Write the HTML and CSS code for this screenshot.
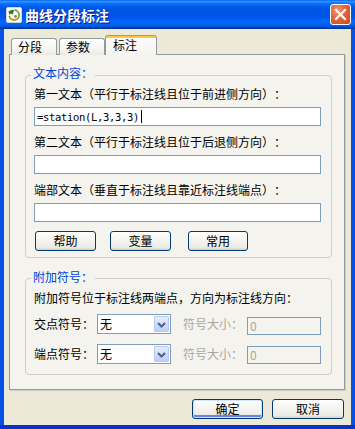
FILE: index.html
```html
<!DOCTYPE html>
<html lang="zh-CN">
<head>
<meta charset="utf-8">
<link rel="stylesheet" href="styles.css">
</head>
<body>
<div class="window">
  <div class="titlebar">
    <svg class="app-icon" width="16" height="16" viewBox="0 0 16 16">
      <rect x="0.5" y="0.5" width="15" height="15" rx="1.5" fill="#ffffff" stroke="#d4d4d4"/>
      <path d="M8.5 3 A5 5 0 1 1 3.2 9" fill="none" stroke="#7aa83c" stroke-width="1.8"/>
      <path d="M2.5 4 L8 2.5 L7 7.5 L5 6.5 L3.5 8 Z" fill="#2f7a1e"/>
      <circle cx="9.5" cy="9.5" r="1.4" fill="#b07a2a"/>
      <circle cx="6.5" cy="12.5" r="1" fill="#c9a040"/>
    </svg>
    <span class="title">曲线分段标注</span>
    <div class="close">
      <svg width="21" height="21" viewBox="0 0 21 21">
        <path d="M6 6 L15 15 M15 6 L6 15" stroke="#ffffff" stroke-width="2.2" stroke-linecap="square"/>
      </svg>
    </div>
  </div>
  <div class="client">
    <div class="tabs">
      <div class="tab t1">分段</div>
      <div class="tab t2">参数</div>
      <div class="tab active">标注</div>
    </div>
    <div class="panel">
      <div class="group g1">
        <div class="legend">文本内容：</div>
        <div class="label l1">第一文本（平行于标注线且位于前进侧方向）：</div>
        <div class="field"><span class="mono">=station(L,3,3,3)</span><span class="caret"></span></div>
        <div class="label">第二文本（平行于标注线且位于后退侧方向）：</div>
        <div class="field"></div>
        <div class="label">端部文本（垂直于标注线且靠近标注线端点）：</div>
        <div class="field"></div>
        <div class="btnrow">
          <div class="btn b1">帮助</div>
          <div class="btn b2">变量</div>
          <div class="btn b3">常用</div>
        </div>
      </div>
      <div class="group g2">
        <div class="legend lg2">附加符号：</div>
        <div class="label l1">附加符号位于标注线两端点，方向为标注线方向：</div>
        <div class="row r1">
          <span class="rlabel">交点符号：</span>
          <div class="combo"><span class="cval">无</span><span class="cbtn"><svg width="15" height="17" viewBox="0 0 15 17"><path d="M4 7 L7.5 10.5 L11 7" fill="none" stroke="#4d6185" stroke-width="2"/></svg></span></div>
          <span class="rlabel gray">符号大小：</span>
          <div class="dis d1">0</div>
        </div>
        <div class="row r2">
          <span class="rlabel">端点符号：</span>
          <div class="combo"><span class="cval">无</span><span class="cbtn"><svg width="15" height="17" viewBox="0 0 15 17"><path d="M4 7 L7.5 10.5 L11 7" fill="none" stroke="#4d6185" stroke-width="2"/></svg></span></div>
          <span class="rlabel gray">符号大小：</span>
          <div class="dis d2">0</div>
        </div>
      </div>
    </div>
    <div class="footer">
      <div class="btn fb default">确定</div>
      <div class="btn fb">取消</div>
    </div>
  </div>
</div>
</body>
</html>
```

FILE: styles.css
```css
html, body {
  margin: 0;
  padding: 0;
}
body {
  font-family: "Noto Sans CJK SC", "Liberation Sans", sans-serif;
  font-size: 12px;
  color: #000;
  text-spacing-trim: space-all;
}
.window {
  width: 355px;
  height: 429px;
  display: flex;
  flex-direction: column;
  background: linear-gradient(to bottom, #0552e6 calc(100% - 4px), #0833c8 calc(100% - 4px));
  box-sizing: border-box;
}
.titlebar {
  height: 29px;
  flex: none;
  display: flex;
  align-items: center;
  padding-left: 6px;
  background: linear-gradient(to bottom, #0058ee 0%, #3593ff 4%, #288eff 7%, #127dff 10%, #036ffc 14%, #0262ee 20%, #0057e5 28%, #0054e3 34%, #0055eb 56%, #005bf5 66%, #026afe 76%, #0062ef 86%, #0052d6 92%, #0040ab 96%, #003092 100%);
}
.app-icon {
  flex: none;
}
.title {
  margin-left: 3px;
  color: #ffffff;
  font-weight: bold;
  font-size: 14px;
  line-height: 16px;
  text-shadow: 1px 1px 0 #0a1883;
}
.close {
  margin-left: auto;
  margin-right: 4px;
  width: 21px;
  height: 21px;
  box-sizing: border-box;
  border: 1px solid #ffffff;
  border-radius: 3px;
  background: radial-gradient(circle at 35% 30%, #f09a7a 0%, #e2643c 45%, #c84a22 100%);
  display: flex;
  align-items: center;
  justify-content: center;
}
.close svg {
  margin: -1px;
}
.client {
  flex: 1;
  margin: 0 4px 4px 4px;
  background: #ece9d8;
  padding-top: 6px;
  display: flex;
  flex-direction: column;
}
.tabs {
  display: flex;
  align-items: flex-end;
  height: 20px;
  margin: 0 0 -1px 7px;
  position: relative;
  z-index: 1;
}
.tab {
  width: 46px;
  height: 17px;
  box-sizing: border-box;
  border: 1px solid #919b9c;
  border-bottom: none;
  border-radius: 3px 3px 0 0;
  background: linear-gradient(to bottom, #ffffff 0%, #f7f7f4 50%, #ecebe6 100%);
  padding-left: 6px;
  line-height: 16px;
}
.t1 {
  margin-right: 2px;
}
.tab.active {
  width: 52px;
  height: 20px;
  border-top: none;
  padding-left: 7px;
  padding-top: 2px;
  background: linear-gradient(to bottom, #e68b2c 0, #e68b2c 1px, #ffc73c 1px, #ffc73c 3px, #fcfcfe 3px, #f4f3ee 100%);
}
.panel {
  margin: 0 6px 0 5px;
  border: 1px solid #919b9c;
  background: #f4f3ee;
  box-shadow: 1px 1px 0 #d0cebf;
  padding: 20px 0 14px 15px;
}
.group {
  width: 307px;
  box-sizing: border-box;
  border: 1px solid #d0d0bf;
  border-radius: 4px;
  padding: 0 10px 6px 8px;
}
.g2 {
  margin-top: 20px;
  padding-bottom: 10px;
}
.legend {
  width: fit-content;
  margin: -10px 0 0 -3px;
  padding: 0 2px;
  background: #f4f3ee;
  color: #0046d5;
  line-height: 14px;
}
.lg2 {
  margin-top: -9px;
}
.label {
  line-height: 14px;
  margin-top: 9px;
  white-space: nowrap;
}
.label.l1 {
  margin-top: 7px;
}
.field {
  height: 19px;
  margin-top: 6px;
  box-sizing: border-box;
  border: 1px solid #7f9db9;
  background: #ffffff;
  padding-left: 2px;
  display: flex;
  align-items: center;
}
.mono {
  font-family: "DejaVu Sans Mono", "Liberation Mono", monospace;
  font-size: 10.5px;
  letter-spacing: -0.32px;
  line-height: 14px;
}
.caret {
  width: 1px;
  height: 13px;
  background: #000000;
  margin-left: 2px;
}
.btnrow {
  display: flex;
  margin-top: 9px;
}
.btn {
  height: 20px;
  box-sizing: border-box;
  border: 1px solid #003c74;
  border-radius: 3px;
  background: linear-gradient(to bottom, #ffffff 0%, #f6f5f1 40%, #ecebe6 85%, #d6d0c5 100%);
  text-align: center;
  line-height: 18px;
}
.b1, .b2 {
  width: 61px;
}
.b1 {
  margin-left: 1px;
}
.b2 {
  margin-left: 14px;
}
.b3 {
  width: 60px;
  margin-left: 17px;
}
.row {
  display: flex;
  align-items: flex-start;
  height: 20px;
}
.r1 {
  margin-top: 9px;
}
.r2 {
  margin-top: 10px;
}
.rlabel {
  width: 60px;
  line-height: 20px;
  white-space: nowrap;
}
.combo {
  width: 74px;
  height: 20px;
  margin-left: 3px;
  box-sizing: border-box;
  border: 1px solid #7f9db9;
  background: #ffffff;
  display: flex;
  align-items: center;
  padding: 0 1px 0 2px;
}
.cval {
  flex: 1;
  line-height: 16px;
}
.cbtn {
  width: 15px;
  height: 16px;
  box-sizing: border-box;
  border: 1px solid #b9c9ef;
  border-radius: 1px;
  background: linear-gradient(to bottom, #e6eefc 0%, #d0ddfa 50%, #bccdf8 100%);
  display: flex;
  align-items: center;
  justify-content: center;
  overflow: hidden;
}
.cbtn svg {
  flex: none;
}
.rlabel.gray {
  margin-left: 12px;
  color: #aca899;
}
.dis {
  width: 74px;
  height: 18px;
  margin-left: 4px;
  box-sizing: border-box;
  border: 1px solid #7f9db9;
  background: #f4f3ee;
  color: #aca899;
  padding-left: 2px;
  line-height: 16px;
}
.d1 {
  margin-top: 3px;
}
.d2 {
  margin-top: 2px;
}
.footer {
  display: flex;
  justify-content: flex-end;
  margin-top: 9px;
  padding-right: 7px;
  gap: 9px;
}
.fb {
  width: 72px;
}
.default {
  width: 71px;
  box-shadow: inset 0 0 0 1px #cee7ff, inset 0 -2px 0 1px #6982ee;
}
```
